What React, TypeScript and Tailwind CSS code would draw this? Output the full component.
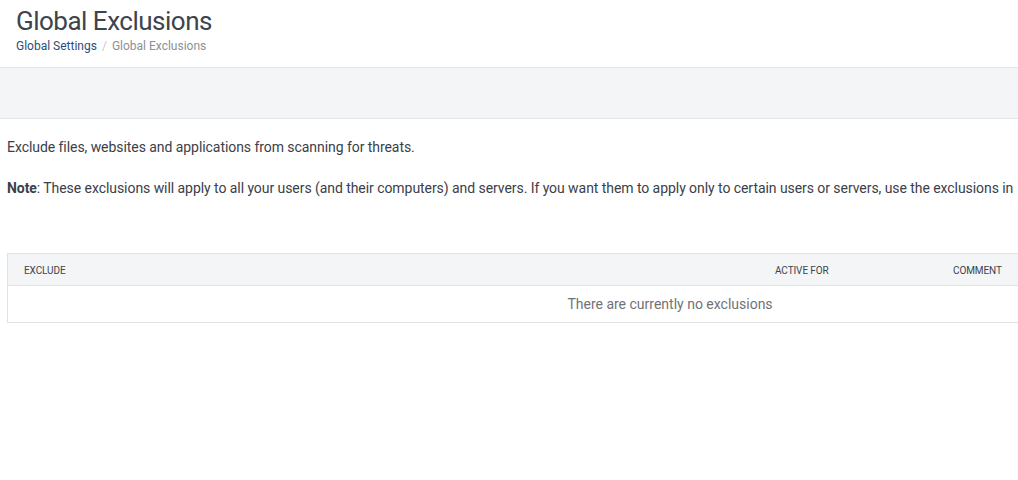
import React from 'react';

const font = { fontFamily: 'Roboto, "Noto Sans", sans-serif' };

export default function App() {
  return (
    <div className="w-[1018px] h-[480px] overflow-hidden bg-white text-[#3b4049]" style={font}>
      {/* Page header */}
      <div className="px-4 pt-[5px] h-[68px] border-b border-[#e3e5e8]">
        <h1 className="text-[26px] leading-[32px] text-[#3d444d] tracking-[-0.5px]">Global Exclusions</h1>
        <div className="flex items-center text-[12px] leading-[18px]">
          <a className="text-[#2f4d7a]">Global Settings</a>
          <span className="mx-[5px] text-[#c5c8cc]">/</span>
          <span className="text-[#8b9097]">Global Exclusions</span>
        </div>
      </div>

      {/* Toolbar band */}
      <div className="h-[51px] bg-[#f4f5f7] border-b border-[#e3e5e8]" />

      {/* Content */}
      <div className="w-[1340px] pl-[7px]">
        <p className="mt-[19px] text-[14px] leading-[18px] tracking-[-0.06px]">
          Exclude files, websites and applications from scanning for threats.
        </p>
        <p className="mt-[23px] text-[14px] leading-[18px] tracking-[-0.06px] whitespace-nowrap">
          <span className="font-bold">Note</span>: These exclusions will apply to all your users (and their computers) and servers. If you want them to apply only to certain users or servers, use the exclusions in
        </p>

        <div className="mt-[56px] w-[1326px] border border-[#e1e3e6]">
          <div className="flex items-center h-[32px] bg-[#f4f5f7] border-b border-[#e1e3e6] text-[10px] uppercase text-[#3d444d] tracking-[-0.1px]">
            <div className="pl-4 w-[767px] pt-[1px]">Exclude</div>
            <div className="w-[178px] pt-[1px]">Active For</div>
            <div className="flex-1 pt-[1px]">Comment</div>
          </div>
          <div className="h-[36px] flex items-center justify-center text-[14px] text-[#6f7378] pt-[1px]">
            There are currently no exclusions
          </div>
        </div>
      </div>
    </div>
  );
}
